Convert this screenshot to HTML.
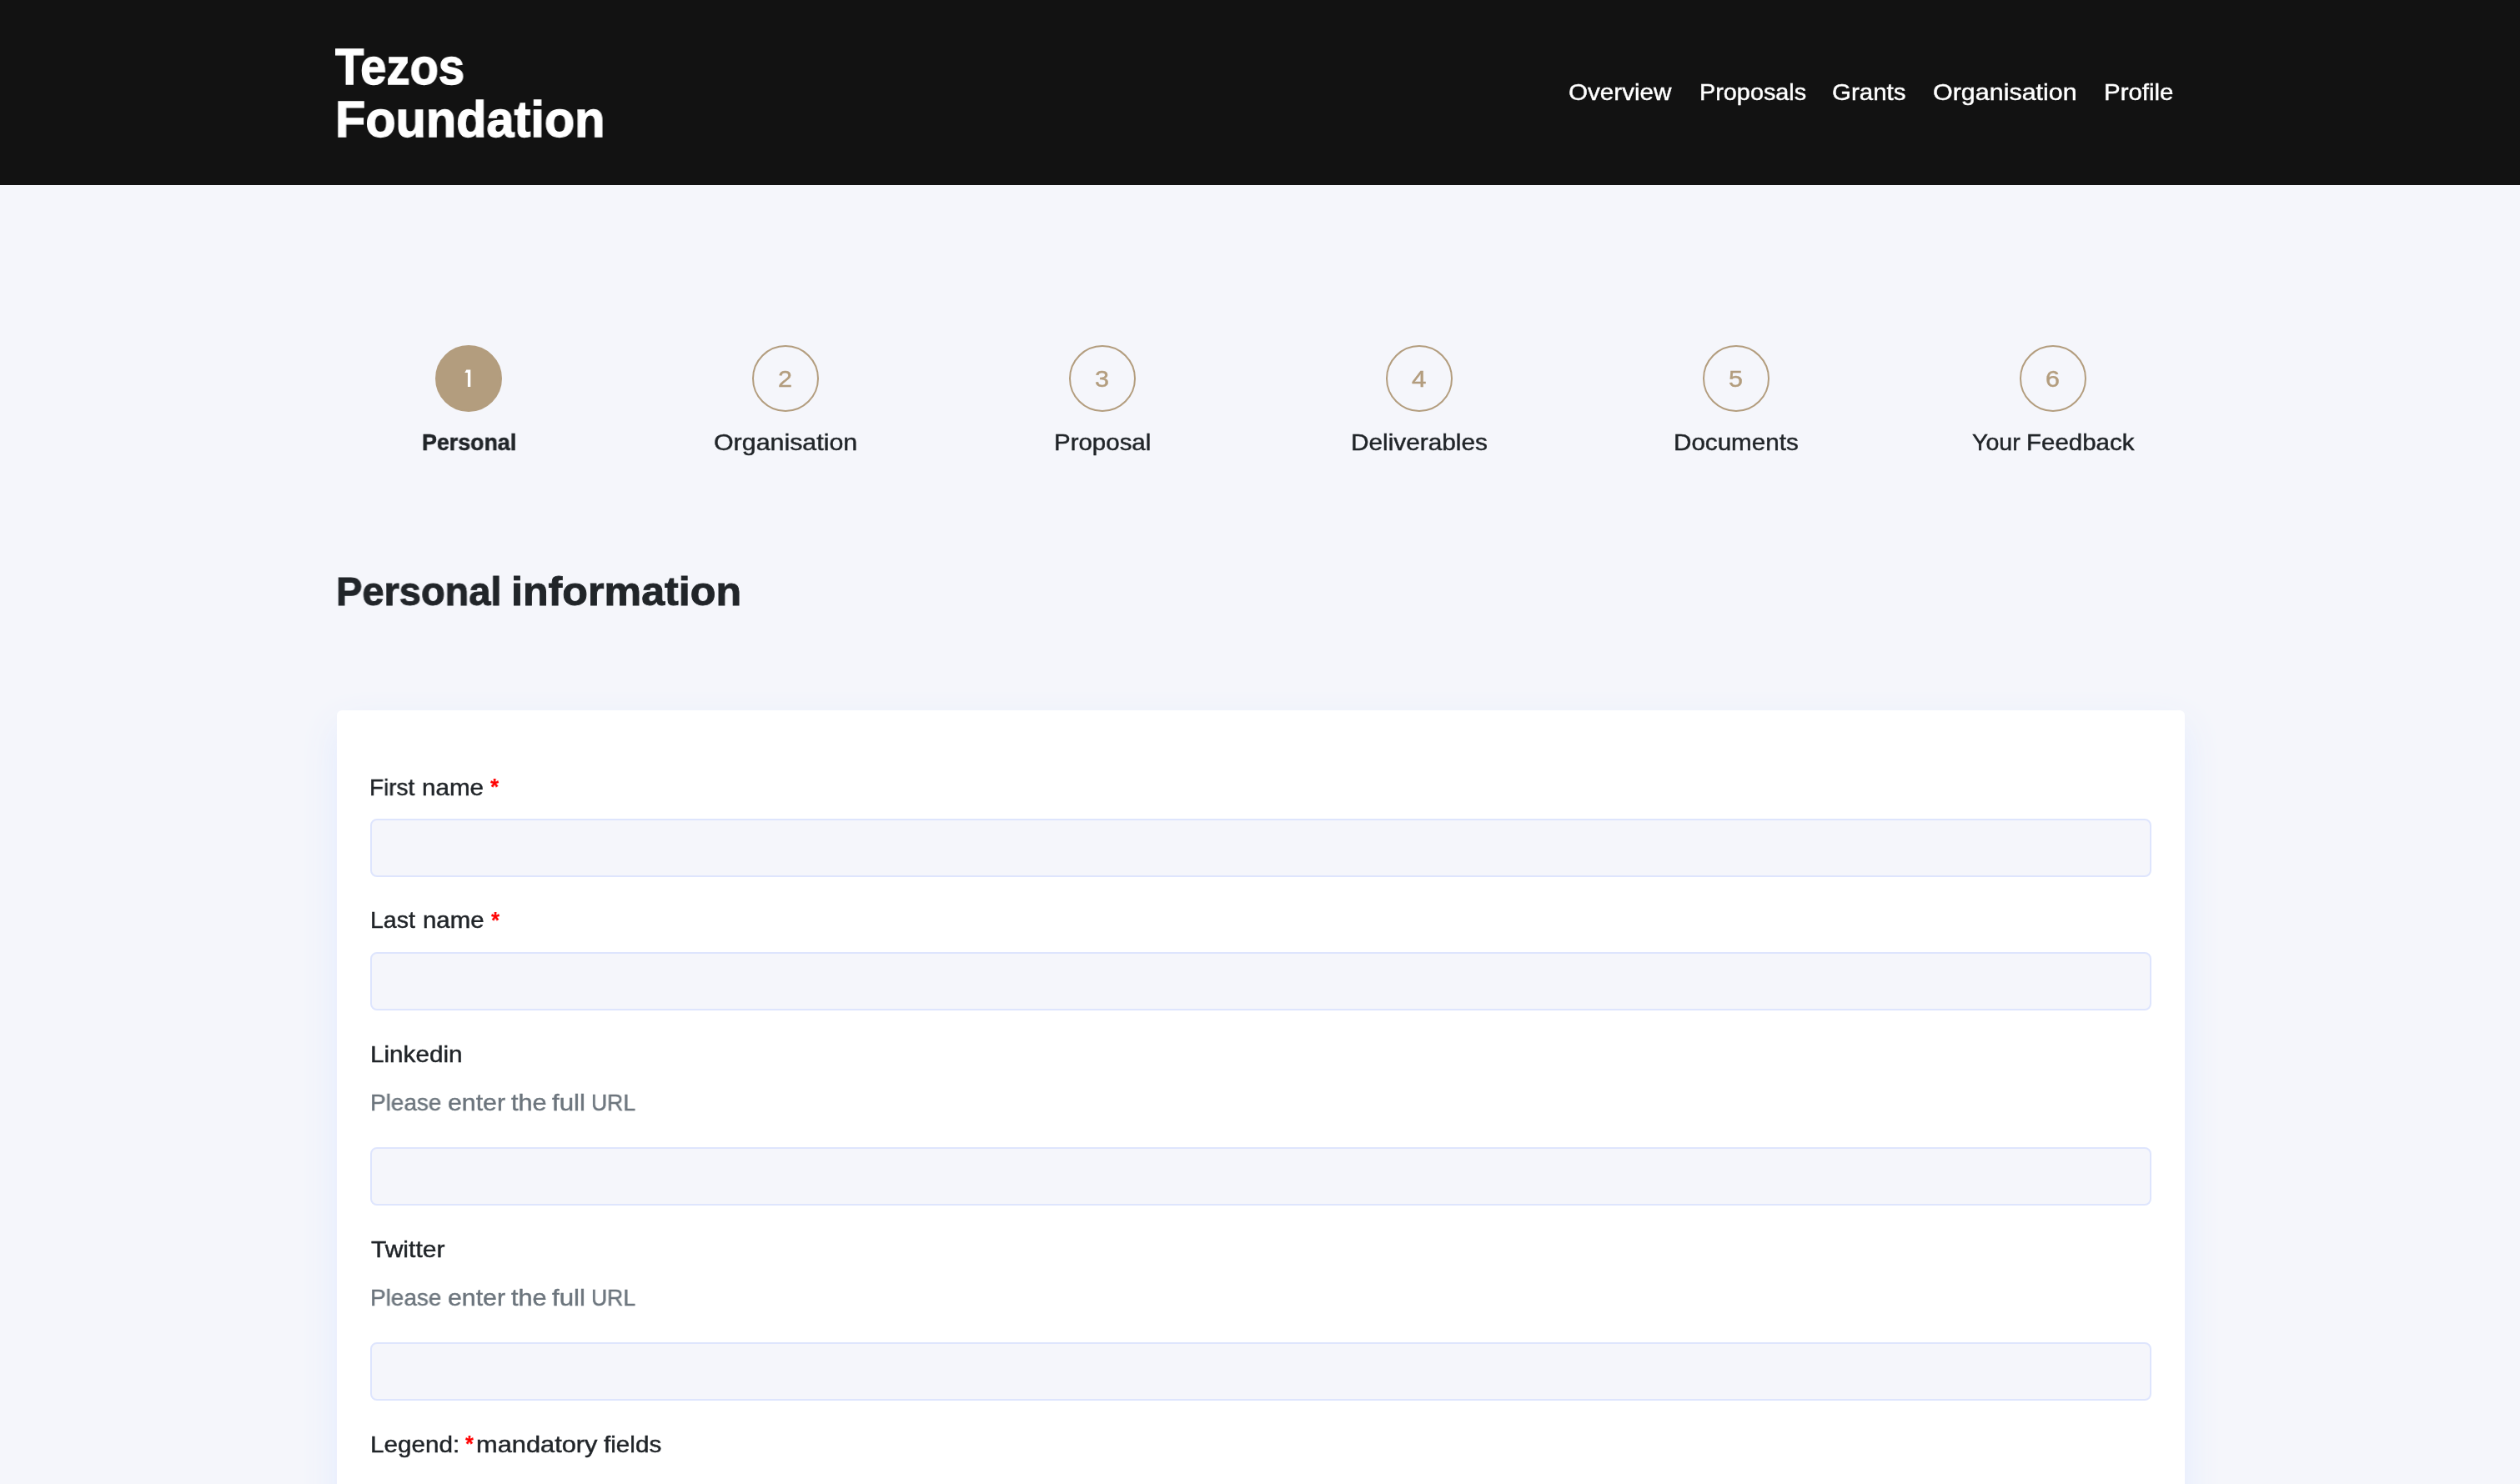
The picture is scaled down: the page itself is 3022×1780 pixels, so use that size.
<!DOCTYPE html>
<html><head><meta charset="utf-8"><title>Tezos Foundation</title>
<style>
html,body{margin:0;padding:0;background:#f5f6fb}
body{width:3022px;height:1780px;overflow:hidden}
#root{position:relative;width:3022px;height:1780px;overflow:hidden;background:#f5f6fb;font-family:"Liberation Sans",sans-serif;transform-origin:0 0}
.t{position:absolute;white-space:nowrap;transform-origin:0 0;display:block;will-change:transform;-webkit-font-smoothing:antialiased}
.hdr{position:absolute;left:0;top:0;width:3022px;height:222px;background:#121212}
.c{position:absolute;top:414px;width:80px;height:80px;border-radius:50%;box-sizing:border-box;border:2px solid #b39d7e}
.c.on{background:#b39d7e}
.card{position:absolute;left:404px;top:852px;width:2216px;height:1100px;background:#fff;border-radius:6px;box-shadow:0 18px 46px rgb(226,235,255)}
.in{position:absolute;left:444px;width:2136px;height:70px;box-sizing:border-box;border:2px solid #dee5fd;border-radius:8px;background:#f5f6fb}
</style></head>
<body>
<div id="root">
<div class="hdr"></div>
<div class="c on" style="left:522px"></div>
<div class="c" style="left:902px"></div>
<div class="c" style="left:1282px"></div>
<div class="c" style="left:1662px"></div>
<div class="c" style="left:2042px"></div>
<div class="c" style="left:2422px"></div>
<svg style="position:absolute;left:550px;top:436px" width="24" height="36" viewBox="550 436 24 36"><path d="M559.3 443.4H564.3V464.1H560.9V446.9H557.3Z" fill="#fff"/></svg>
<div class="card"></div>
<div class="in" style="top:982px"></div>
<div class="in" style="top:1142px"></div>
<div class="in" style="top:1376px"></div>
<div class="in" style="top:1610px"></div>
<span class="t" id="logo1" style="left:401.80px;top:49.20px;font-size:61.5px;line-height:61.5px;font-weight:700;color:#fff;-webkit-text-stroke:1.3px #fff;transform:scaleX(0.9137)">Tezos</span>
<span class="t" id="logo2" style="left:402.08px;top:112.50px;font-size:61px;line-height:61px;font-weight:700;color:#fff;-webkit-text-stroke:1.3px #fff;transform:scaleX(0.9742)">Foundation</span>
<span class="t" id="nav1" style="left:1881.16px;top:95.70px;font-size:28.5px;line-height:28.5px;font-weight:400;color:#fff;-webkit-text-stroke:0.45px #fff;transform:scaleX(1.0387)">Overview</span>
<span class="t" id="nav2" style="left:2037.68px;top:95.70px;font-size:28.5px;line-height:28.5px;font-weight:400;color:#fff;-webkit-text-stroke:0.45px #fff;transform:scaleX(1.0113)">Proposals</span>
<span class="t" id="nav3" style="left:2197.27px;top:95.70px;font-size:28.5px;line-height:28.5px;font-weight:400;color:#fff;-webkit-text-stroke:0.45px #fff;transform:scaleX(1.0345)">Grants</span>
<span class="t" id="nav4" style="left:2317.53px;top:95.70px;font-size:28.5px;line-height:28.5px;font-weight:400;color:#fff;-webkit-text-stroke:0.45px #fff;transform:scaleX(1.0688)">Organisation</span>
<span class="t" id="nav5" style="left:2522.63px;top:95.70px;font-size:28.5px;line-height:28.5px;font-weight:400;color:#fff;-webkit-text-stroke:0.45px #fff;transform:scaleX(1.0333)">Profile</span>
<span class="t" id="st1" style="left:506.06px;top:515.60px;font-size:28.5px;line-height:28.5px;font-weight:700;color:#212529;-webkit-text-stroke:0.5px #212529;transform:scaleX(0.9407)">Personal</span>
<span class="t" id="st2" style="left:855.73px;top:515.60px;font-size:28.5px;line-height:28.5px;font-weight:400;color:#212529;-webkit-text-stroke:0.45px #212529;transform:scaleX(1.0656)">Organisation</span>
<span class="t" id="st3" style="left:1263.83px;top:515.60px;font-size:28.5px;line-height:28.5px;font-weight:400;color:#212529;-webkit-text-stroke:0.45px #212529;transform:scaleX(1.0339)">Proposal</span>
<span class="t" id="st4" style="left:1619.81px;top:515.60px;font-size:28.5px;line-height:28.5px;font-weight:400;color:#212529;-webkit-text-stroke:0.45px #212529;transform:scaleX(1.0455)">Deliverables</span>
<span class="t" id="st5" style="left:2006.82px;top:515.60px;font-size:28.5px;line-height:28.5px;font-weight:400;color:#212529;-webkit-text-stroke:0.45px #212529;transform:scaleX(1.0387)">Documents</span>
<span class="t" id="st6a" style="left:2364.80px;top:515.60px;font-size:28.5px;line-height:28.5px;font-weight:400;color:#212529;-webkit-text-stroke:0.45px #212529;transform:scaleX(1.0017)">Your</span>
<span class="t" id="st6b" style="left:2429.73px;top:515.60px;font-size:28.5px;line-height:28.5px;font-weight:400;color:#212529;-webkit-text-stroke:0.45px #212529;transform:scaleX(1.0339)">Feedback</span>
<span class="t" id="n2" style="left:933.43px;top:439.50px;font-size:28.5px;line-height:28.5px;font-weight:400;color:#b39d7e;-webkit-text-stroke:0.45px #b39d7e;transform:scaleX(1.0714)">2</span>
<span class="t" id="n3" style="left:1313.43px;top:439.50px;font-size:28.5px;line-height:28.5px;font-weight:400;color:#b39d7e;-webkit-text-stroke:0.45px #b39d7e;transform:scaleX(1.0714)">3</span>
<span class="t" id="n4" style="left:1692.80px;top:439.50px;font-size:28.5px;line-height:28.5px;font-weight:400;color:#b39d7e;-webkit-text-stroke:0.45px #b39d7e;transform:scaleX(1.1000)">4</span>
<span class="t" id="n5" style="left:2073.43px;top:439.50px;font-size:28.5px;line-height:28.5px;font-weight:400;color:#b39d7e;-webkit-text-stroke:0.45px #b39d7e;transform:scaleX(1.0714)">5</span>
<span class="t" id="n6" style="left:2453.43px;top:439.50px;font-size:28.5px;line-height:28.5px;font-weight:400;color:#b39d7e;-webkit-text-stroke:0.45px #b39d7e;transform:scaleX(1.0714)">6</span>
<span class="t" id="h1a" style="left:403.13px;top:685.60px;font-size:47.8px;line-height:47.8px;font-weight:700;color:#212529;-webkit-text-stroke:0.9px #212529;transform:scaleX(0.9832)">Personal</span>
<span class="t" id="h1b" style="left:612.80px;top:685.60px;font-size:47.8px;line-height:47.8px;font-weight:700;color:#212529;-webkit-text-stroke:0.9px #212529;transform:scaleX(1.0502)">information</span>
<span class="t" id="l1a" style="left:443.34px;top:929.60px;font-size:28.5px;line-height:28.5px;font-weight:400;color:#212529;-webkit-text-stroke:0.45px #212529;transform:scaleX(0.9778)">First</span>
<span class="t" id="l1b" style="left:506.46px;top:929.60px;font-size:28.5px;line-height:28.5px;font-weight:400;color:#212529;-webkit-text-stroke:0.45px #212529;transform:scaleX(1.0386)">name</span>
<span class="t" id="a1" style="left:588.00px;top:928.80px;font-size:28.5px;line-height:28.5px;font-weight:700;color:#ff0000;-webkit-text-stroke:0.2px #ff0000;transform:scaleX(0.9167)">*</span>
<span class="t" id="l2a" style="left:444.10px;top:1089.40px;font-size:28.5px;line-height:28.5px;font-weight:400;color:#212529;-webkit-text-stroke:0.45px #212529;transform:scaleX(0.9981)">Last</span>
<span class="t" id="l2b" style="left:507.17px;top:1089.40px;font-size:28.5px;line-height:28.5px;font-weight:400;color:#212529;-webkit-text-stroke:0.45px #212529;transform:scaleX(1.0314)">name</span>
<span class="t" id="a2" style="left:588.90px;top:1088.80px;font-size:28.5px;line-height:28.5px;font-weight:700;color:#ff0000;-webkit-text-stroke:0.2px #ff0000;transform:scaleX(0.9000)">*</span>
<span class="t" id="l3" style="left:443.62px;top:1249.80px;font-size:28.5px;line-height:28.5px;font-weight:400;color:#212529;-webkit-text-stroke:0.45px #212529;transform:scaleX(1.0417)">Linkedin</span>
<span class="t" id="hint1a" style="left:443.74px;top:1307.90px;font-size:28.5px;line-height:28.5px;font-weight:400;color:#6c757d;-webkit-text-stroke:0.45px #6c757d;transform:scaleX(0.9800)">Please</span>
<span class="t" id="hint1b" style="left:536.54px;top:1307.90px;font-size:28.5px;line-height:28.5px;font-weight:400;color:#6c757d;-webkit-text-stroke:0.45px #6c757d;transform:scaleX(1.0625)">enter</span>
<span class="t" id="hint1c" style="left:612.90px;top:1307.90px;font-size:28.5px;line-height:28.5px;font-weight:400;color:#6c757d;-webkit-text-stroke:0.45px #6c757d;transform:scaleX(1.0769)">the</span>
<span class="t" id="hint1d" style="left:662.20px;top:1307.90px;font-size:28.5px;line-height:28.5px;font-weight:400;color:#6c757d;-webkit-text-stroke:0.45px #6c757d;transform:scaleX(1.0971)">full</span>
<span class="t" id="hint1e" style="left:708.94px;top:1307.90px;font-size:28.5px;line-height:28.5px;font-weight:400;color:#6c757d;-webkit-text-stroke:0.45px #6c757d;transform:scaleX(0.9309)">URL</span>
<span class="t" id="l4" style="left:445.30px;top:1484.00px;font-size:28.5px;line-height:28.5px;font-weight:400;color:#212529;-webkit-text-stroke:0.45px #212529;transform:scaleX(1.0536)">Twitter</span>
<span class="t" id="hint2a" style="left:443.74px;top:1541.90px;font-size:28.5px;line-height:28.5px;font-weight:400;color:#6c757d;-webkit-text-stroke:0.45px #6c757d;transform:scaleX(0.9800)">Please</span>
<span class="t" id="hint2b" style="left:536.54px;top:1541.90px;font-size:28.5px;line-height:28.5px;font-weight:400;color:#6c757d;-webkit-text-stroke:0.45px #6c757d;transform:scaleX(1.0625)">enter</span>
<span class="t" id="hint2c" style="left:612.90px;top:1541.90px;font-size:28.5px;line-height:28.5px;font-weight:400;color:#6c757d;-webkit-text-stroke:0.45px #6c757d;transform:scaleX(1.0769)">the</span>
<span class="t" id="hint2d" style="left:662.20px;top:1541.90px;font-size:28.5px;line-height:28.5px;font-weight:400;color:#6c757d;-webkit-text-stroke:0.45px #6c757d;transform:scaleX(1.0971)">full</span>
<span class="t" id="hint2e" style="left:708.94px;top:1541.90px;font-size:28.5px;line-height:28.5px;font-weight:400;color:#6c757d;-webkit-text-stroke:0.45px #6c757d;transform:scaleX(0.9309)">URL</span>
<span class="t" id="lg1" style="left:443.82px;top:1717.90px;font-size:28.5px;line-height:28.5px;font-weight:400;color:#212529;-webkit-text-stroke:0.45px #212529;transform:scaleX(1.0414)">Legend:</span>
<span class="t" id="a3" style="left:558.30px;top:1717.20px;font-size:28.5px;line-height:28.5px;font-weight:700;color:#ff0000;-webkit-text-stroke:0.2px #ff0000;transform:scaleX(0.8833)">*</span>
<span class="t" id="lg2a" style="left:570.62px;top:1717.90px;font-size:28.5px;line-height:28.5px;font-weight:400;color:#212529;-webkit-text-stroke:0.45px #212529;transform:scaleX(1.0806)">mandatory</span>
<span class="t" id="lg2b" style="left:723.70px;top:1717.90px;font-size:28.5px;line-height:28.5px;font-weight:400;color:#212529;-webkit-text-stroke:0.45px #212529;transform:scaleX(1.0409)">fields</span>
</div>
<script>(function(){var w=window.innerWidth||3022,k=w/3022;if(Math.abs(k-1)>0.004){var r=document.getElementById("root"),b=document.body;r.style.transform="scale("+k+")";b.style.width=(3022*k)+"px";b.style.height=(1780*k)+"px";}})();</script>
</body></html>
